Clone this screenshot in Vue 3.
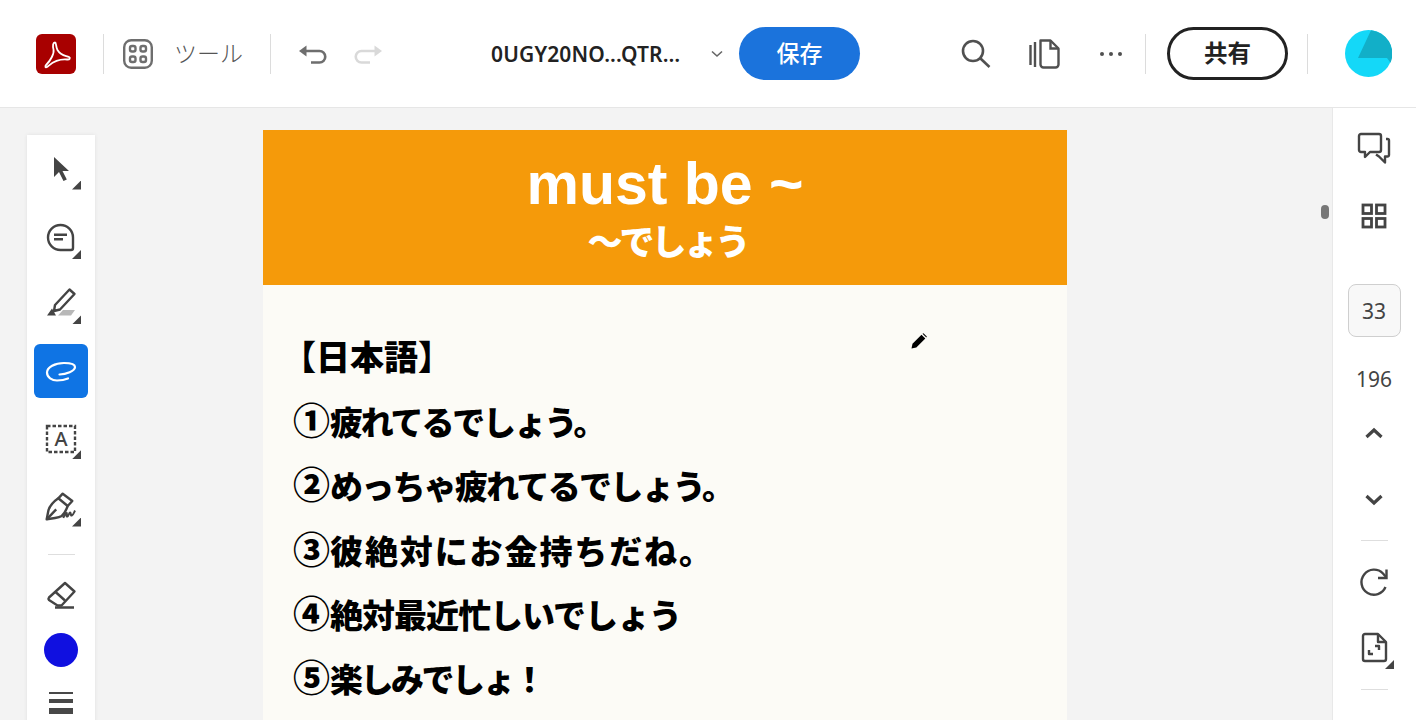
<template>
  <div class="app">
    <header class="topbar">
      <svg class="logo" width="40" height="40" viewBox="0 0 40 40">
        <rect width="40" height="40" rx="6" fill="#a80000" />
        <path d="M19 8.500c-2 0-2.500 3-1.500 7 1 4-3 11-7 15-2 2-1 3.500.5 2.500 3-2 8-8.500 20-7.500 3 .2 3.500-1.500 2-2.500-3-1.500-8-1-11.500-7-2-4-1-7.500-2.500-7.500z" fill="none" stroke="#fff" stroke-width="1.800" stroke-linejoin="round" />
      </svg>
      <span class="sep sep-a"></span>
      <svg class="tools-icon" width="30" height="30" viewBox="0 0 30 30" fill="none" stroke="#6e6e6e" stroke-width="2.400">
        <rect x="1.200" y="1.200" width="27.600" height="27.600" rx="7" />
        <rect x="7" y="7" width="5.500" height="5.500" rx="2" />
        <rect x="17.500" y="7" width="5.500" height="5.500" rx="2" />
        <rect x="7" y="17.500" width="5.500" height="5.500" rx="2" />
        <rect x="17.500" y="17.500" width="5.500" height="5.500" rx="2" />
      </svg>
      <span class="tools-label">ツール</span>
      <span class="sep sep-b"></span>
      <svg class="undo" width="30" height="30" viewBox="0 0 30 30" fill="none" stroke="#6e6e6e" stroke-width="2.600">
        <path d="M7 12h14.500a5.750 5.750 0 0 1 0 11.500H13" />
        <path d="M1 12l7.500-5.500v11z" fill="#6e6e6e" stroke="none" />
      </svg>
      <svg class="redo" width="30" height="30" viewBox="0 0 30 30" fill="none" stroke="#d9d9d9" stroke-width="2.600">
        <path d="M23 12H8.500a5.750 5.750 0 0 0 0 11.500H17" />
        <path d="M29 12l-7.500-5.500v11z" fill="#d9d9d9" stroke="none" />
      </svg>
      <span class="filename">0UGY20NO...QTR…</span>
      <svg class="chevron" width="12" height="8" viewBox="0 0 12 8" fill="none" stroke="#666" stroke-width="1.600">
        <path d="M1 1.500l5 4.500 5-4.500" />
      </svg>
      <button class="save">保存</button>
      <svg class="search" width="30" height="30" viewBox="0 0 30 30" fill="none" stroke="#505050" stroke-width="2.600">
        <circle cx="12" cy="12" r="10" />
        <path d="M19.500 19.500l9 8.500" />
      </svg>
      <svg class="pages" width="32" height="30" viewBox="0 0 32 30" fill="none" stroke="#505050" stroke-width="2.400">
        <path d="M2.500 6v20M7 3v25" />
        <path d="M12.500 1.500h10l8 8v16a3 3 0 0 1-3 3h-12a3 3 0 0 1-3-3v-24z" stroke-linejoin="round" />
        <path d="M22.500 1.500v8h8" />
      </svg>
      <svg class="more" width="24" height="6" viewBox="0 0 24 6" fill="#505050">
        <circle cx="3" cy="3" r="2" />
        <circle cx="12" cy="3" r="2" />
        <circle cx="21" cy="3" r="2" />
      </svg>
      <span class="sep sep-c"></span>
      <button class="share">共有</button>
      <span class="sep sep-d"></span>
      <svg class="avatar" width="47" height="47" viewBox="0 0 47 47">
        <circle cx="23.500" cy="23.500" r="23.500" fill="#14d8f8" />
        <path d="M26 .2L13 28h29l3.500 4.800A23.500 23.500 0 0 0 26 .2z" fill="#12afc8" />
      </svg>
    </header>

    <div class="workspace">
      <aside class="left-rail">
        <div class="tool corner">
          <svg width="36" height="36" viewBox="0 0 36 36" fill="#444">
            <path d="M11 6v20l5-5 4.500 9 3.300-1.600-4.300-8.400H26z" />
          </svg>
        </div>
        <div class="tool corner bubble">
          <svg width="36" height="36" viewBox="0 0 36 36" fill="none" stroke="#444" stroke-width="2.400">
            <path d="M17.500 5a12.500 12.500 0 0 0 0 25H28a2 2 0 0 0 2-2V17.500A12.500 12.500 0 0 0 17.500 5z" />
            <path d="M11 14.700h13M11 19.300h9" />
          </svg>
        </div>
        <div class="tool corner">
          <svg width="36" height="36" viewBox="0 0 36 36" fill="none" stroke="#444" stroke-width="2.400">
            <path d="M26.500 4.500l5 4.500-14.500 15.500-6 1.500 1-6z" stroke-linejoin="round" />
            <path d="M4 30.500l5-7 4 7z" fill="#444" stroke="none" />
            <path d="M15 30.500l5-5.500h12l-4 5.500z" fill="#b8b8b8" stroke="none" />
          </svg>
        </div>
        <div class="tool active">
          <svg width="36" height="36" viewBox="0 0 36 36" fill="none" stroke="#fff" stroke-width="2.200" stroke-linecap="round">
            <path d="M16.500 21.500C23 21.500 32 18 32 14c0-3-6-4-11-4C12 10 4 14 4 19.500c0 5 5 8 10 8 4 0 8-.7 11-2" />
          </svg>
        </div>
        <div class="tool corner">
          <svg width="36" height="36" viewBox="0 0 36 36" fill="none">
            <rect x="4" y="6" width="28" height="26" stroke="#444" stroke-width="2.400" stroke-dasharray="3.500 2" />
            <text x="18" y="26" text-anchor="middle" class="box-letter">A</text>
          </svg>
        </div>
        <div class="tool corner">
          <svg width="36" height="36" viewBox="0 0 36 36" fill="none" stroke="#444" stroke-width="2.400" stroke-linejoin="round">
            <path d="M19.700 5.700l9.600 7.300-4.600 5-9.400-7.700z" />
            <path d="M15.300 10.300C10 14 6.500 18 5.300 23l-1.600 8.300 8.300-1.300c3-.5 5-1 6.700-2 2.500-2 4.500-6 6-10" />
            <path d="M3.700 31.300l9.500-10" />
            <path d="M20.300 30c1.500-3.500 3-5.500 3.500-5s-1 4 .5 3.500 2-4.500 3-4 0 3.500 1.500 3 2-2.500 3.200-5" stroke-width="1.900" />
          </svg>
        </div>
        <span class="rail-line"></span>
        <div class="tool eraser">
          <svg width="36" height="36" viewBox="0 0 36 36" fill="none" stroke="#444" stroke-width="2.400" stroke-linejoin="round">
            <path d="M22 5l9.500 8.500-13 14h-4L6 22a2 2 0 0 1 0-2.500z" />
            <path d="M12 13.500l10 9M12 29.500h19" />
          </svg>
        </div>
        <span class="color-dot"></span>
        <div class="weights">
          <i class="w1"></i>
          <i class="w2"></i>
          <i class="w3"></i>
        </div>
      </aside>

      <main class="doc-area">
        <article class="page">
          <div class="banner">
            <h1>must be ~</h1>
            <h2>〜でしょう</h2>
          </div>
          <div class="page-body">
            <p class="heading">【日本語】</p>
            <p v-for="line in lines" :key="line.mark" :style="{ letterSpacing: line.spacing + 'px' }">
              <span class="num">{{ line.mark }}</span>{{ line.text }}
            </p>
            <svg class="pencil" width="16" height="16" viewBox="0 0 16 16" fill="#000">
              <path d="M0.500 15.500l1-4.800 9-9 3.800 3.800-9 9z" />
              <path d="M11.500 .8l1-.5 3.300 3.300-.5 1z" />
            </svg>
          </div>
        </article>
        <span class="scroll-thumb"></span>
      </main>

      <aside class="right-rail">
        <svg class="r-chat" width="36" height="36" viewBox="0 0 36 36" fill="none" stroke="#444" stroke-width="2.400" stroke-linejoin="round">
          <path d="M5 4h18a2 2 0 0 1 2 2v14a2 2 0 0 1-2 2H14l-5 5v-5H5a2 2 0 0 1-2-2V6a2 2 0 0 1 2-2z" />
          <path d="M30 9h1.500A1.500 1.500 0 0 1 33 10.500V25a1.500 1.500 0 0 1-1.500 1.500H29v6l-6-6-3-2" />
        </svg>
        <svg class="r-grid" width="36" height="36" viewBox="0 0 36 36" fill="none" stroke="#444" stroke-width="2.800">
          <rect x="7" y="7" width="8.500" height="8.500" />
          <rect x="20.500" y="7" width="8.500" height="8.500" />
          <rect x="7" y="20.500" width="8.500" height="8.500" />
          <rect x="20.500" y="20.500" width="8.500" height="8.500" />
        </svg>
        <div class="page-now">33</div>
        <div class="page-total">196</div>
        <svg class="r-up" width="36" height="36" viewBox="0 0 36 36" fill="none" stroke="#444" stroke-width="3.200">
          <path d="M10.500 22l7.500-7 7.500 7" />
        </svg>
        <svg class="r-down" width="36" height="36" viewBox="0 0 36 36" fill="none" stroke="#444" stroke-width="3.200">
          <path d="M10.500 14l7.500 7 7.500-7" />
        </svg>
        <span class="rail-line r-line-a"></span>
        <svg class="r-rotate" width="36" height="36" viewBox="0 0 36 36" fill="none" stroke="#444" stroke-width="2.400">
          <path d="M29.500 23A12.500 12.500 0 1 1 27 9.500l3 3.500" />
          <path d="M30.500 5.500V14H22" />
        </svg>
        <div class="r-file corner">
          <svg width="36" height="36" viewBox="0 0 36 36" fill="none" stroke="#444" stroke-width="2.400" stroke-linejoin="round">
            <path d="M9 5h13l8 8v17a2 2 0 0 1-2 2H9a2 2 0 0 1-2-2V7a2 2 0 0 1 2-2z" />
            <path d="M22 5v8h8" />
            <path d="M13 21v4h4M19 17h4v4" />
          </svg>
        </div>
        <span class="rail-line r-line-b"></span>
      </aside>
    </div>
  </div>
</template>

<script setup>
const lines = [
  { mark: '①', text: '疲れてるでしょう。', spacing: -2.2 },
  { mark: '②', text: 'めっちゃ疲れてるでしょう。', spacing: -1.75 },
  { mark: '③', text: '彼絶対にお金持ちだね。', spacing: 1.9 },
  { mark: '④', text: '絶対最近忙しいでしょう', spacing: -1 },
  { mark: '⑤', text: '楽しみでしょ！', spacing: -2.5 },
]
</script>

<style>
html, body {
  margin: 0;
  height: 720px;
  overflow: hidden;
}
</style>

<style scoped>
.app {
  width: 1416px;
  height: 720px;
  overflow: hidden;
  display: flex;
  flex-direction: column;
  background: #f3f3f3;
  font-family: "Noto Sans", "Noto Sans CJK JP", sans-serif;
}

.topbar {
  height: 107px;
  flex: none;
  display: flex;
  align-items: center;
  background: #fff;
  border-bottom: 1px solid #e6e6e6;
  box-sizing: content-box;
}

.topbar svg {
  flex: none;
}

.logo { margin-left: 36px; }

.sep {
  width: 1px;
  height: 40px;
  flex: none;
  background: #dcdcdc;
}
.sep-a { margin-left: 27px; }
.tools-icon { margin-left: 19px; }
.tools-label {
  margin-left: 21px;
  margin-bottom: 4px;
  font-family: "Noto Sans CJK JP", sans-serif;
  font-size: 23px;
  font-weight: 300;
  color: #555;
  white-space: nowrap;
}
.sep-b { margin-left: 27px; }
.undo { margin-left: 27px; }
.redo { margin-left: 25px; }

.filename {
  margin-left: 108px;
  width: 202px;
  font-size: 21px;
  font-weight: 600;
  letter-spacing: .15px;
  color: #222;
  white-space: nowrap;
}

.chevron { margin-left: 18px; }

.save {
  margin-left: 16px;
  width: 121px;
  height: 53px;
  border: 0;
  border-radius: 27px;
  background: #1b73dc;
  color: #fff;
  font-family: "Noto Sans CJK JP", sans-serif;
  font-size: 23px;
  font-weight: 500;
  padding: 0 0 4px;
}

.search { margin-left: 101px; }
.pages { margin-left: 37px; }
.more { margin-left: 39px; }
.sep-c { margin-left: 22px; }

.share {
  margin-left: 21px;
  width: 121px;
  height: 53px;
  box-sizing: border-box;
  border: 3px solid #222;
  border-radius: 27px;
  background: #fff;
  color: #222;
  font-family: "Noto Sans CJK JP", sans-serif;
  font-size: 23.500px;
  font-weight: 700;
  padding: 0 0 4px;
}

.sep-d { margin-left: 19px; }
.avatar { margin-left: 37px; }

.workspace {
  flex: 1;
  display: flex;
  min-height: 0;
}

.left-rail {
  margin: 27px 0 0 27px;
  width: 68px;
  height: 600px;
  flex: none;
  display: flex;
  flex-direction: column;
  align-items: center;
  box-sizing: border-box;
  padding-top: 6.600px;
  gap: 13.400px;
  background: #fff;
  box-shadow: 0 0 4px rgba(0, 0, 0, .08);
}

.tool {
  position: relative;
  width: 54px;
  height: 54px;
  flex: none;
  display: flex;
  align-items: center;
  justify-content: center;
  border-radius: 6px;
}

.tool.bubble {
  margin: 2px 0 -2px;
}

.tool.active {
  background: #0f74e4;
}

.corner::after {
  content: "";
  position: absolute;
  right: 7px;
  bottom: 6px;
  width: 9px;
  height: 9px;
  background: #444;
  clip-path: polygon(100% 0, 100% 100%, 0 100%);
}

.box-letter {
  font-family: "Noto Sans", sans-serif;
  font-size: 20px;
  font-weight: 500;
  fill: #444;
}

.rail-line {
  display: block;
  flex: none;
  width: 27px;
  height: 1px;
  background: #dedede;
}

.left-rail .rail-line { margin: 8px 0 -1px; }
.tool.eraser { height: 48px; margin-top: 5px; }

.color-dot {
  width: 34px;
  height: 34px;
  flex: none;
  margin-top: -1px;
  border-radius: 50%;
  background: #1010e0;
}

.weights {
  display: flex;
  flex-direction: column;
  gap: 5px;
  width: 24px;
  flex: none;
  margin-top: 12px;
}
.weights i {
  display: block;
  background: #484848;
}
.w1 { height: 2px; }
.w2 { height: 4px; }
.w3 { height: 6px; }

.doc-area {
  position: relative;
  flex: 1;
  min-width: 0;
  display: flex;
  justify-content: flex-start;
}

.page {
  margin: 22px 0 0 168px;
  width: 804px;
  height: 700px;
  flex: none;
  background: #fcfbf6;
}

.banner {
  height: 155px;
  box-sizing: border-box;
  padding-top: 22px;
  background: #f59a0a;
  color: #fff;
  text-align: center;
}

.banner h1 {
  margin: 0;
  font-family: "Liberation Sans", sans-serif;
  font-size: 59px;
  line-height: 64px;
  font-weight: 700;
}

.banner h2 {
  margin: 1px 0 0;
  padding-left: 5px;
  font-family: "Noto Sans CJK JP", sans-serif;
  font-size: 35px;
  line-height: 46px;
  font-weight: 900;
  letter-spacing: -3px;
}

.page-body {
  position: relative;
  padding: 39px 0 0 30px;
}

.page-body p {
  margin: 0;
  height: 64.200px;
  line-height: 64px;
  font-family: "Noto Sans CJK JP", sans-serif;
  font-size: 33px;
  font-weight: 900;
  color: #000;
  white-space: nowrap;
}

.page-body p.heading {
  margin: 0 0 1px -11px;
  font-size: 34px;
}

.num {
  display: inline-block;
  width: 37px;
  font-size: 37px;
  line-height: 0;
  letter-spacing: 0;
}

.pencil {
  position: absolute;
  left: 648px;
  top: 48px;
}

.scroll-thumb {
  position: absolute;
  left: 1226px;
  top: 97px;
  width: 8px;
  height: 14px;
  border-radius: 4px;
  background: #777;
}

.right-rail {
  width: 84px;
  flex: none;
  display: flex;
  flex-direction: column;
  align-items: center;
  box-sizing: border-box;
  padding: 22px 1px 0 0;
  background: #fff;
  border-left: 1px solid #e8e8e8;
}

.right-rail > svg,
.r-file {
  flex: none;
}

.r-grid { margin-top: 32px; }

.page-now {
  margin-top: 50px;
  width: 53px;
  height: 53px;
  flex: none;
  box-sizing: border-box;
  display: flex;
  align-items: center;
  justify-content: center;
  border: 1.500px solid #cfcfcf;
  border-radius: 8px;
  background: #f8f8f8;
  font-size: 21px;
  color: #444;
}

.page-total {
  margin-top: 29px;
  height: 26px;
  line-height: 26px;
  font-size: 21px;
  color: #444;
}

.r-up { margin-top: 23px; }
.r-down { margin-top: 31px; }
.right-rail .r-line-a { margin-top: 22px; }
.r-rotate { margin-top: 23px; }

.r-file {
  position: relative;
  margin-top: 29px;
  width: 36px;
  height: 36px;
}
.r-file::after {
  right: -2px;
  bottom: -4px;
}

.right-rail .r-line-b { margin-top: 24px; }
</style>
